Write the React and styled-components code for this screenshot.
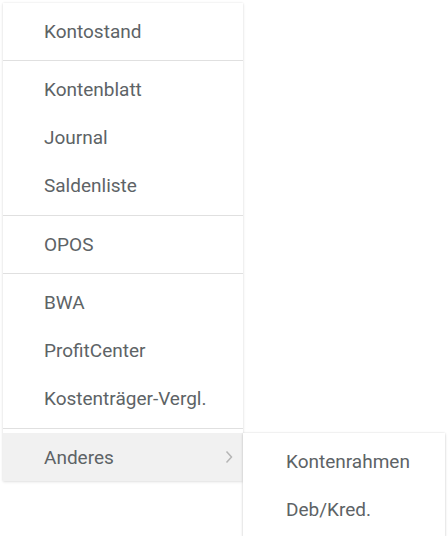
import styled, { createGlobalStyle } from "styled-components";

const GlobalStyle = createGlobalStyle`
  html, body {
    margin: 0;
    padding: 0;
    background: #ffffff;
    font-family: Roboto, "Noto Sans", sans-serif;
  }
`;

const groups = [
  ["Kontostand"],
  ["Kontenblatt", "Journal", "Saldenliste"],
  ["OPOS"],
  ["BWA", "ProfitCenter", "Kostenträger-Vergl."],
];

const subItems = ["Kontenrahmen", "Deb/Kred."];

function App() {
  return (
    <>
      <GlobalStyle />
      <Page>
        <Menu>
          {groups.map((group, i) => (
            <div key={i}>
              {group.map((label) => (
                <Item key={label}>{label}</Item>
              ))}
              <Divider />
            </div>
          ))}
          <Item active>
            Anderes
            <Chevron width="8" height="14" viewBox="0 0 8 14">
              <path d="M1.5 1.5 L6.5 7 L1.5 12.5" fill="none" stroke="#b5b5b5" strokeWidth="1.5" />
            </Chevron>
            <SubMenu>
              {subItems.map((label) => (
                <SubItem key={label}>{label}</SubItem>
              ))}
            </SubMenu>
          </Item>
        </Menu>
      </Page>
    </>
  );
}

export default App;

const Page = styled.div`
  width: 448px;
  height: 536px;
  overflow: hidden;
  position: relative;
`;

const Menu = styled.div`
  width: 240px;
  margin: 3px 0 0 3px;
  padding-top: 4px;
  background: #fff;
  box-shadow: 0 1px 3px 0 rgba(0, 0, 0, 0.1), 0 0 2px 0 rgba(0, 0, 0, 0.08);
`;

const Item = styled.div`
  position: relative;
  height: 48px;
  display: flex;
  align-items: center;
  padding-left: 41px;
  font-size: 19px;
  color: #5d6366;
  background: ${({ active }) => (active ? "#f1f1f1" : "transparent")};
`;

const Divider = styled.div`
  height: 1px;
  background: #e0e0e0;
  margin: 5px 0 4.5px;
`;

const Chevron = styled.svg`
  position: absolute;
  right: 10px;
  top: 17px;
`;

const SubMenu = styled.div`
  position: absolute;
  left: 100%;
  top: 0;
  width: 202px;
  padding: 4px 0;
  background: #fff;
  box-shadow: 0 1px 3px 0 rgba(0, 0, 0, 0.14), 0 0 2px 0 rgba(0, 0, 0, 0.1);
`;

const SubItem = styled.div`
  height: 48px;
  display: flex;
  align-items: center;
  padding-left: 43px;
  font-size: 19px;
  color: #5d6366;
`;
